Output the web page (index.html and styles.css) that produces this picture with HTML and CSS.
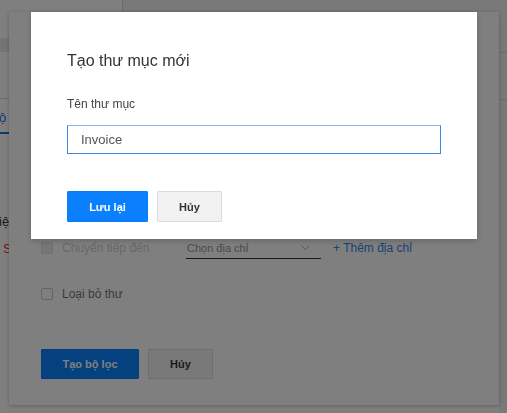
FILE: index.html
```html
<!DOCTYPE html>
<html lang="vi">
<head>
<meta charset="utf-8">
<title>Tạo thư mục mới</title>
<link rel="stylesheet" href="styles.css">
</head>
<body>
<div class="page">
  <div class="topbar"><div class="toptab"></div></div>
  <div class="body-row">
    <div class="sheet">
      <div class="band"></div>
      <div class="tabs"></div>
      <div class="tabrow"><span class="tab-on">ộ</span></div>
      <div class="cut-a">iệ</div>
      <div class="cut-b">S</div>
    </div>
    <div class="gutter"><div class="g1"></div><div class="g2"></div></div>
  </div>

  <div class="filter-dialog">
    <div class="frow">
      <span class="cb cb-disabled"></span>
      <span class="flabel flabel-disabled">Chuyển tiếp đến</span>
      <div class="fselect">
        <span>Chọn địa chỉ</span>
        <svg class="chev" width="9" height="6" viewBox="0 0 9 6"><polyline points="0.5,0.5 4.5,4.5 8.5,0.5" fill="none" stroke="#b5b5b5" stroke-width="1"/></svg>
      </div>
      <a class="addlink">+ Thêm địa chỉ</a>
    </div>
    <div class="frow frow2">
      <span class="cb"></span>
      <span class="flabel">Loại bỏ thư</span>
    </div>
    <div class="factions">
      <button class="btn btn-primary btn-wide">Tạo bộ lọc</button>
      <button class="btn btn-default">Hủy</button>
    </div>
  </div>
</div>

<div class="overlay"></div>

<div class="modal">
  <h2 class="modal-title">Tạo thư mục mới</h2>
  <label class="modal-label" for="folder">Tên thư mục</label>
  <input id="folder" class="modal-input" type="text" value="Invoice">
  <div class="modal-actions">
    <button class="btn btn-primary btn-save">Lưu lại</button>
    <button class="btn btn-default btn-cancel">Hủy</button>
  </div>
</div>
</body>
</html>
```
FILE: styles.css
```css
* { box-sizing: border-box; }
html, body { margin: 0; padding: 0; }
body {
  font-family: "Liberation Sans", Arial, sans-serif;
  background: #f2f2f2;
  width: 507px;
  height: 413px;
  overflow: hidden;
}
.page {
  position: relative;
  width: 507px;
  height: 413px;
  display: flex;
  flex-direction: column;
}
.topbar { height: 12px; display: flex; }
.toptab { width: 123px; background: #fff; border-right: 1px solid #d6d6d6; }
.body-row { flex: 1; display: flex; }
.sheet { width: 499px; background: #fff; overflow: hidden; }
.band { margin-top: 26px; height: 14px; background: #e9e9e9; }
.tabs { height: 47px; border-bottom: 1px solid #dadada; }
.tabrow { display: flex; }
.tab-on {
  margin-left: -1px;
  padding: 11px 4px 6px 0;
  width: 10px;
  font-size: 13px;
  line-height: 16px;
  color: #1f6fd0;
  border-bottom: 2px solid #1f6fd0;
}
.cut-a { margin-top: 80px; font-size: 13px; line-height: 16px; color: #333; margin-left: -1px; }
.cut-b { margin-top: 11px; font-size: 13px; line-height: 16px; color: #d9363e; margin-left: 3px; }
.gutter { flex: 1; }
.g1 { height: 41px; border-bottom: 1px solid #dcdcdc; }
.g2 { height: 47px; border-bottom: 1px solid #dcdcdc; }

.filter-dialog {
  position: absolute;
  left: 9px;
  top: 12px;
  width: 490px;
  height: 393px;
  background: #fff;
  box-shadow: 0 1px 4px rgba(0,0,0,0.25);
  padding: 224px 0 0 32px;
}
.frow { display: flex; align-items: center; height: 24px; }
.frow2 { margin-top: 22px; }
.cb {
  width: 12px;
  height: 12px;
  border: 1px solid #c9c9c9;
  border-radius: 2px;
  background: #fff;
  margin-right: 9px;
  flex: none;
}
.cb-disabled { background: #e9edf2; border-color: #dde2e8; }
.flabel { font-size: 12px; color: #777; }
.flabel-disabled { width: 124px; color: #cfcfcf; }
.fselect {
  width: 135px;
  height: 22px;
  border-bottom: 1px solid #333;
  display: flex;
  align-items: center;
  justify-content: space-between;
  padding: 0 11px 0 1px;
  font-size: 11px;
  color: #929292;
}
.chev { display: block; }
.addlink { margin-left: 12px; font-size: 12px; color: #2f86ee; }
.factions { margin-top: 43px; display: flex; gap: 9px; }

.btn {
  font-family: "Liberation Sans", Arial, sans-serif;
  font-size: 11px;
  font-weight: bold;
  height: 30px;
  border-radius: 1px;
  cursor: pointer;
  padding: 0;
}
.btn-primary { background: #0a80ff; color: #fff; border: 1px solid #0a7cf8; }
.btn-default { background: #f2f2f2; color: #333; border: 1px solid #dcdcdc; width: 65px; }
.btn-wide { width: 98px; }

.overlay {
  position: fixed;
  inset: 0;
  background: rgba(0,0,0,0.5);
}
.modal {
  position: fixed;
  left: 31px;
  top: 12px;
  width: 446px;
  background: #fff;
  box-shadow: 0 2px 6px rgba(0,0,0,0.2);
  padding: 39px 36px 17px;
  display: flex;
  flex-direction: column;
}
.modal-title {
  margin: 0;
  font-size: 16px;
  line-height: 20px;
  font-weight: normal;
  color: #333;
}
.modal-label {
  margin-top: 25px;
  font-size: 12px;
  line-height: 16px;
  color: #444;
}
.modal-input {
  margin-top: 13px;
  width: 100%;
  height: 29px;
  padding: 0 13px;
  border: 1px solid #3b87e2;
  border-top-color: #8cbaee;
  border-radius: 0;
  font-family: "Liberation Sans", Arial, sans-serif;
  font-size: 13px;
  color: #555;
  outline: none;
}
.modal-actions { margin-top: 37px; display: flex; gap: 9px; }
.btn-save { width: 81px; height: 31px; }
.btn-cancel { width: 65px; height: 31px; }
```
